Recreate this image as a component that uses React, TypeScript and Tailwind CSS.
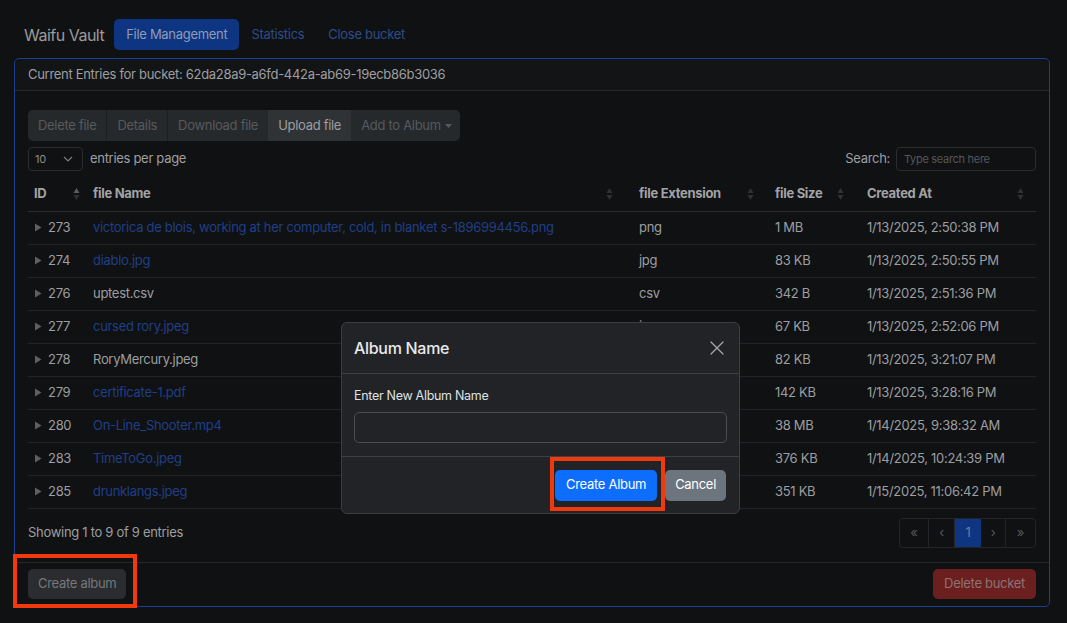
import { X } from "lucide-react";

const rows = [
  { id: 273, name: "victorica de blois, working at her computer, cold, in blanket s-1896994456.png", link: true, ext: "png", size: "1 MB", created: "1/13/2025, 2:50:38 PM" },
  { id: 274, name: "diablo.jpg", link: true, ext: "jpg", size: "83 KB", created: "1/13/2025, 2:50:55 PM" },
  { id: 276, name: "uptest.csv", link: false, ext: "csv", size: "342 B", created: "1/13/2025, 2:51:36 PM" },
  { id: 277, name: "cursed rory.jpeg", link: true, ext: "jpeg", size: "67 KB", created: "1/13/2025, 2:52:06 PM" },
  { id: 278, name: "RoryMercury.jpeg", link: false, ext: "jpeg", size: "82 KB", created: "1/13/2025, 3:21:07 PM" },
  { id: 279, name: "certificate-1.pdf", link: true, ext: "pdf", size: "142 KB", created: "1/13/2025, 3:28:16 PM" },
  { id: 280, name: "On-Line_Shooter.mp4", link: true, ext: "mp4", size: "38 MB", created: "1/14/2025, 9:38:32 AM" },
  { id: 283, name: "TimeToGo.jpeg", link: true, ext: "jpeg", size: "376 KB", created: "1/14/2025, 10:24:39 PM" },
  { id: 285, name: "drunklangs.jpeg", link: true, ext: "jpeg", size: "351 KB", created: "1/15/2025, 11:06:42 PM" },
];

function SortIcon({ active }: { active?: boolean }) {
  return (
    <svg width="7" height="14" viewBox="0 0 7 14" className="shrink-0">
      <path d="M3.5 1 L6.5 6 L0.5 6 Z" fill={active ? "#5b5d60" : "#2f3134"} />
      <path d="M3.5 13 L6.5 8 L0.5 8 Z" fill="#2f3134" />
    </svg>
  );
}

function Caret() {
  return (
    <svg width="8" height="9" viewBox="0 0 8 9" className="shrink-0">
      <path d="M1 0.5 L7.5 4.5 L1 8.5 Z" fill="#5d5f62" />
    </svg>
  );
}

export default function App() {
  return (
    <div
      className="relative min-h-[623px] w-full bg-[#101113] text-[13px] tracking-[-0.3px] text-[#9d9fa1] overflow-hidden"
      style={{ fontFamily: "Inter, 'Liberation Sans', sans-serif" }}
    >
      <div className="pl-[14px] pr-[17px] pt-[19px]">
        {/* nav */}
        <div className="flex items-center h-[31px] pl-[10px]">
          <span className="text-[16px] tracking-[-0.5px] text-[#9a9b9d] mr-[10px]">Waifu Vault</span>
          <span className="h-[31px] px-[12px] flex items-center rounded-[5px] bg-[#0e3582] text-[#8e9bb5]">
            File Management
          </span>
          <span className="h-[31px] px-[12px] flex items-center text-[#2d4c8a]">Statistics</span>
          <span className="h-[31px] px-[12px] flex items-center text-[#2d4c8a]">Close bucket</span>
        </div>

        {/* card */}
        <div className="mt-[8px] border border-[#1b3f95] rounded-[5px] flex flex-col">
          <div className="h-[32px] px-[13px] flex items-center bg-[#131416] border-b border-[#262729] rounded-t-[5px]">
            Current Entries for bucket: 62da28a9-a6fd-442a-ab69-19ecb86b3036
          </div>

          <div className="px-[13px] pt-[19px] pb-[14px] border-b border-[#262729]">
            <div className="flex h-[31px] rounded-[5px] bg-[#26292c] text-[#56595d] overflow-hidden w-fit">
              <span className="px-[10px] flex items-center border-r border-[#1c1e21]">Delete file</span>
              <span className="px-[10px] flex items-center border-r border-[#1c1e21]">Details</span>
              <span className="px-[10px] flex items-center">Download file</span>
              <span className="px-[10px] flex items-center bg-[#303336] text-[#9c9ea1]">Upload file</span>
              <span className="pl-[10px] pr-[8px] flex items-center gap-[4px]">
                Add to Album
                <svg width="7" height="4" viewBox="0 0 7 4"><path d="M0 0 L7 0 L3.5 4 Z" fill="#56595d" /></svg>
              </span>
            </div>

            <div className="flex items-center justify-between mt-[6px] h-[24px]">
              <div className="flex items-center gap-[7px]">
                <div className="w-[55px] h-[24px] border border-[#2a2c2f] rounded-[4px] flex items-center justify-between px-[6px] text-[11px] text-[#8a8c8f]">
                  <span>10</span>
                  <svg width="10" height="6" viewBox="0 0 10 6" className="mr-[3px]"><path d="M1 1 L5 5 L9 1" stroke="#7a7c7f" strokeWidth="1.2" fill="none" /></svg>
                </div>
                <span>entries per page</span>
              </div>
              <div className="flex items-center gap-[6px]">
                <span>Search:</span>
                <div className="w-[140px] h-[24px] border border-[#2a2c2f] rounded-[4px] flex items-center px-[7px] text-[11px] text-[#55575a]">
                  Type search here
                </div>
              </div>
            </div>

            <table className="w-full mt-[6px] border-collapse">
              <thead>
                <tr className="h-[34px] border-b border-[#2a2b2e] font-bold text-[#a1a3a5]">
                  <th className="text-left font-bold pl-[6px] w-[58px]">
                    <div className="flex items-center justify-between pr-[6px]">
                      <span>ID</span>
                      <SortIcon active />
                    </div>
                  </th>
                  <th className="text-left font-bold pl-[7px]">
                    <div className="flex items-center justify-between pr-[16px]">
                      <span>file Name</span>
                      <SortIcon />
                    </div>
                  </th>
                  <th className="text-left font-bold pl-[10px] w-[133px]">
                    <div className="flex items-center justify-between pr-[8px]">
                      <span>file Extension</span>
                      <SortIcon />
                    </div>
                  </th>
                  <th className="text-left font-bold pl-[13px] w-[92px]">
                    <div className="flex items-center justify-between pr-[10px]">
                      <span>file Size</span>
                      <SortIcon />
                    </div>
                  </th>
                  <th className="text-left font-bold pl-[13px] w-[182px]">
                    <div className="flex items-center justify-between pr-[12px]">
                      <span>Created At</span>
                      <SortIcon />
                    </div>
                  </th>
                </tr>
              </thead>
              <tbody>
                {rows.map((r) => (
                  <tr key={r.id} className="h-[33px] border-b border-[#232427] text-[#9c9ea0]">
                    <td className="pl-[6px]">
                      <div className="flex items-center gap-[6px]">
                        <Caret />
                        <span>{r.id}</span>
                      </div>
                    </td>
                    <td className={"pl-[7px] whitespace-nowrap " + (r.link ? "text-[#1f3f86]" : "")}>{r.name}</td>
                    <td className="pl-[10px]">{r.ext}</td>
                    <td className="pl-[13px]">{r.size}</td>
                    <td className="pl-[13px] whitespace-nowrap">{r.created}</td>
                  </tr>
                ))}
              </tbody>
            </table>

            <div className="flex items-center justify-between mt-[9px]">
              <span>Showing 1 to 9 of 9 entries</span>
              <div className="flex h-[30px] border border-[#232528] rounded-[4px] overflow-hidden text-[#56585b]">
                <span className="w-[29px] flex items-center justify-center border-r border-[#232528]">«</span>
                <span className="w-[26px] flex items-center justify-center border-r border-[#232528]">‹</span>
                <span className="w-[26px] flex items-center justify-center bg-[#0e3582] text-[#6f7d9a]">1</span>
                <span className="w-[25px] flex items-center justify-center border-r border-[#232528]">›</span>
                <span className="w-[29px] flex items-center justify-center">»</span>
              </div>
            </div>
          </div>

          <div className="h-[43px] px-[13px] flex items-center justify-between">
            <span className="h-[30px] px-[10px] flex items-center rounded-[5px] bg-[#2a2c2f] text-[#76787b]">Create album</span>
            <span className="h-[30px] px-[11px] flex items-center rounded-[5px] bg-[#6b1f1f] text-[#8e7274]">Delete bucket</span>
          </div>
        </div>
      </div>

      {/* annotation box around page button */}
      <div className="absolute left-[13px] top-[554px] w-[124px] h-[54px] border-[4px] border-[#f03a0e]" />

      {/* modal */}
      <div className="absolute left-[341px] top-[322px] w-[399px] h-[192px] bg-[#212327] border border-[#3b3d41] rounded-[6px] flex flex-col text-[#dfe1e3]">
        <div className="h-[51px] pl-[12px] pr-[10px] flex items-center justify-between border-b border-[#3d3f43]">
          <span className="text-[16px] font-medium text-[#e8e9ea]">Album Name</span>
          <X className="w-[24px] h-[24px] text-[#a6a8ab]" strokeWidth={1.2} />
        </div>
        <div className="h-[83px] px-[12px] pt-[13px] border-b border-[#3d3f43]">
          <div className="text-[12.5px]">Enter New Album Name</div>
          <div className="mt-[6px] h-[31px] border border-[#4a4c50] rounded-[5px] bg-[#212327]" />
        </div>
        <div className="flex-1 flex items-center justify-end gap-[8px] px-[13px]">
          <span className="h-[31px] px-[11px] flex items-center rounded-[5px] bg-[#0d6efd] text-white">Create Album</span>
          <span className="h-[31px] px-[10px] flex items-center rounded-[5px] bg-[#6c757d] text-white">Cancel</span>
        </div>
      </div>

      <div className="absolute left-[550px] top-[457px] w-[115px] h-[54px] border-[4px] border-[#f03a0e]" />
    </div>
  );
}
